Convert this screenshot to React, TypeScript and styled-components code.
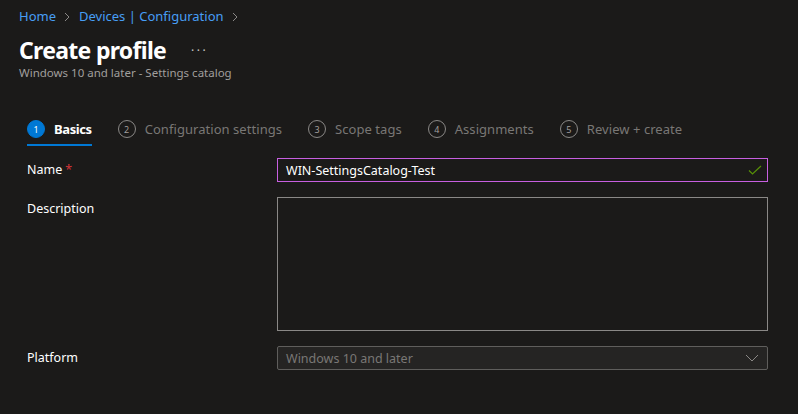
import React from "react";
import styled, { createGlobalStyle } from "styled-components";

const Global = createGlobalStyle`
  html, body { margin: 0; padding: 0; background: #1b1a19; }
  body { font-family: "Noto Sans", "Open Sans", sans-serif; color: #ffffff; }
`;

const Page = styled.div`
  width: 798px;
  height: 414px;
  background: #1b1a19;
  overflow: hidden;
  box-sizing: border-box;
`;

const Header = styled.div`
  padding: 7px 0 0 19px;
`;

const Breadcrumb = styled.nav`
  display: flex;
  align-items: center;
  gap: 7px;
  font-size: 13px;
  line-height: 18px;
  color: #479ef5;
`;

const Crumb = styled.span`
  color: #479ef5;
`;

const Chevron = styled.svg`
  width: 8px;
  height: 10px;
  margin: 1px 1px 0 0;
`;

const TitleRow = styled.div`
  display: flex;
  align-items: center;
  gap: 25px;
  margin-top: 11px;
`;

const Title = styled.h1`
  margin: 0;
  font-size: 23px;
  line-height: 28px;
  font-weight: 700;
  color: #ffffff;
  letter-spacing: -0.7px;
`;

const More = styled.span`
  font-size: 12px;
  color: #c8c6c4;
  letter-spacing: 2.5px;
  margin-top: 0;
`;

const Subtitle = styled.div`
  font-size: 11.5px;
  line-height: 16px;
  color: #a19f9d;
  margin-top: 1px;
`;

const Tabs = styled.div`
  display: flex;
  align-items: stretch;
  gap: 26px;
  margin: 33px 0 0 27px;
`;

const Tab = styled.div<{ $active?: boolean }>`
  display: flex;
  align-items: center;
  gap: 9px;
  height: 30px;
  border-bottom: 2px solid ${(p) => (p.$active ? "#0078d4" : "transparent")};
  font-size: 13px;
  font-weight: ${(p) => (p.$active ? 700 : 400)};
  letter-spacing: ${(p) => (p.$active ? "-0.4px" : "0.05px")};
  color: ${(p) => (p.$active ? "#ffffff" : "#797775")};
`;

const StepCircle = styled.span<{ $active?: boolean }>`
  width: 18px;
  height: 18px;
  border-radius: 50%;
  box-sizing: border-box;
  display: flex;
  align-items: center;
  justify-content: center;
  font-size: 9px;
  font-weight: 400;
  letter-spacing: 0;
  background: ${(p) => (p.$active ? "#0078d4" : "transparent")};
  border: 1px solid ${(p) => (p.$active ? "#0078d4" : "#8a8886")};
  color: ${(p) => (p.$active ? "#ffffff" : "#a19f9d")};
`;

const Form = styled.div`
  display: grid;
  grid-template-columns: 250px 491px;
  row-gap: 15px;
  margin: 12px 0 0 27px;
`;

const Label = styled.label`
  font-size: 12.5px;
  line-height: 24px;
  color: #ffffff;
`;

const Required = styled.span`
  color: #d13438;
  margin-left: 3px;
`;

const TextInput = styled.div`
  height: 24px;
  box-sizing: border-box;
  border: 1px solid #c75fe0;
  display: flex;
  align-items: center;
  justify-content: space-between;
  padding: 0 5px 0 8px;
  font-size: 12.5px;
  color: #ffffff;
`;

const TextArea = styled.div`
  height: 134px;
  box-sizing: border-box;
  border: 1px solid #8a8886;
`;

const Select = styled.div`
  height: 24px;
  box-sizing: border-box;
  border: 1px solid #5f5e5c;
  border-radius: 2px;
  background: #252423;
  display: flex;
  align-items: center;
  justify-content: space-between;
  padding: 0 8px 0 8px;
  font-size: 12.5px;
  color: #797775;
`;

const ChevronRight = () => (
  <Chevron viewBox="0 0 8 10">
    <path d="M2 1 L6 5 L2 9" stroke="#8a8886" strokeWidth="1" fill="none" />
  </Chevron>
);

const steps = [
  "Basics",
  "Configuration settings",
  "Scope tags",
  "Assignments",
  "Review + create",
];

export default function App() {
  return (
    <Page>
      <Global />
      <Header>
        <Breadcrumb>
          <Crumb>Home</Crumb>
          <ChevronRight />
          <Crumb>Devices | Configuration</Crumb>
          <ChevronRight />
        </Breadcrumb>
        <TitleRow>
          <Title>Create profile</Title>
          <More>···</More>
        </TitleRow>
        <Subtitle>Windows 10 and later - Settings catalog</Subtitle>
      </Header>
      <Tabs>
        {steps.map((s, i) => (
          <Tab key={s} $active={i === 0}>
            <StepCircle $active={i === 0}>{i + 1}</StepCircle>
            {s}
          </Tab>
        ))}
      </Tabs>
      <Form>
        <Label>
          Name<Required>*</Required>
        </Label>
        <TextInput>
          <span>WIN-SettingsCatalog-Test</span>
          <svg width="14" height="10" viewBox="0 0 14 10">
            <path d="M1 5.5 L4.5 9 L13 1" stroke="#6bb700" strokeWidth="1.2" fill="none" opacity="0.75" />
          </svg>
        </TextInput>
        <Label>Description</Label>
        <TextArea />
        <Label>Platform</Label>
        <Select>
          <span>Windows 10 and later</span>
          <svg width="14" height="8" viewBox="0 0 14 8">
            <path d="M1 1 L7 7 L13 1" stroke="#8a8886" strokeWidth="1" fill="none" />
          </svg>
        </Select>
      </Form>
    </Page>
  );
}
